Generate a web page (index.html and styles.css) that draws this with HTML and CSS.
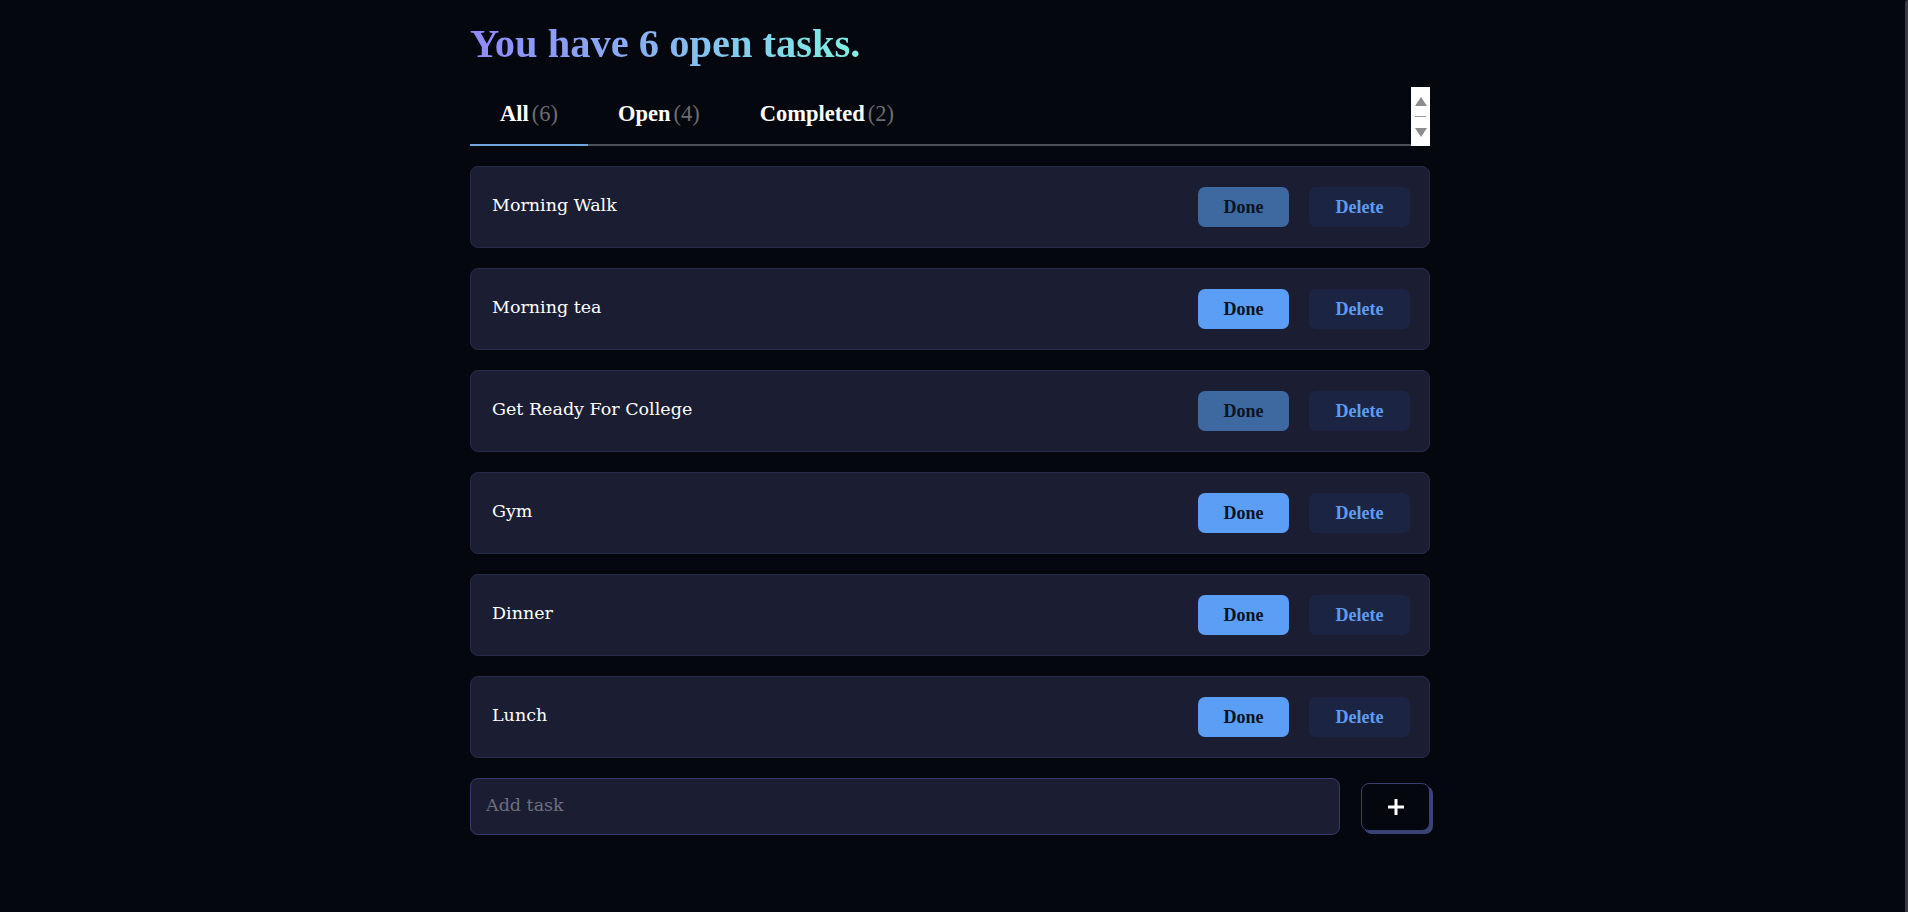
FILE: index.html
```html
<!DOCTYPE html>
<html lang="en">
<head>
<meta charset="utf-8">
<title>Tasks</title>
<link rel="stylesheet" href="styles.css">
</head>
<body>
<div class="frame-edge"></div>
<div class="page">
  <main class="app">
    <h1 class="title"><span class="grad">You have 6 open tasks.</span></h1>
    <div class="tabbar">
      <div class="tabs">
        <div class="tab active">All<span class="count">(6)</span></div>
        <div class="tab">Open<span class="count">(4)</span></div>
        <div class="tab">Completed<span class="count">(2)</span></div>
      </div>
      <div class="scroller">
        <span class="arrow up"></span>
        <span class="sep"></span>
        <span class="arrow down"></span>
      </div>
    </div>
    <ul class="list">
      <li class="card"><span class="name">Morning Walk</span><div class="actions"><button class="btn done dim">Done</button><button class="btn del">Delete</button></div></li>
      <li class="card"><span class="name">Morning tea</span><div class="actions"><button class="btn done">Done</button><button class="btn del">Delete</button></div></li>
      <li class="card"><span class="name">Get Ready For College</span><div class="actions"><button class="btn done dim">Done</button><button class="btn del">Delete</button></div></li>
      <li class="card"><span class="name">Gym</span><div class="actions"><button class="btn done">Done</button><button class="btn del">Delete</button></div></li>
      <li class="card"><span class="name">Dinner</span><div class="actions"><button class="btn done">Done</button><button class="btn del">Delete</button></div></li>
      <li class="card"><span class="name">Lunch</span><div class="actions"><button class="btn done">Done</button><button class="btn del">Delete</button></div></li>
    </ul>
    <form class="add">
      <input class="field" type="text" placeholder="Add task">
      <button class="plus" type="button" aria-label="Add">
        <svg width="18" height="18" viewBox="0 0 18 18"><path d="M9 1v16M1 9h16" stroke="#fff" stroke-width="3" fill="none"/></svg>
      </button>
    </form>
  </main>
</div>
</body>
</html>
```
FILE: styles.css
```css
html, body {
  margin: 0;
  padding: 0;
  background: #05070f;
  height: 100%;
}
body {
  font-family: "Liberation Serif", "DejaVu Serif", serif;
  color: #f2f2f2;
}
.frame-edge {
  position: fixed;
  top: 0;
  right: 0;
  width: 3px;
  height: 100%;
  background: #3a3b40;
  border-top-left-radius: 4px;
}
.page {
  display: flex;
  justify-content: center;
  padding-right: 8px;
}
.app {
  width: 960px;
  padding-top: 20px;
}
.title {
  margin: 0;
  font-size: 40.5px;
  line-height: 48px;
  font-weight: 700;
}
.grad {
  background: linear-gradient(90deg, #9088fb 0%, #86b6f2 50%, #7ff2e2 100%);
  -webkit-background-clip: text;
  background-clip: text;
  color: transparent;
}
.tabbar {
  margin-top: 19px;
  display: flex;
  height: 59px;
}
.tabs {
  flex: 1;
  display: flex;
  border-bottom: 2px solid #4c4e58;
  height: 57px;
  align-self: flex-end;
}
.tab {
  padding: 0 30px 3px;
  font-size: 22.5px;
  font-weight: 700;
  color: #ffffff;
  display: flex;
  align-items: center;
  box-sizing: border-box;
  margin-bottom: -2px;
  border-bottom: 2px solid transparent;
  height: 59px;
}
.tab.active {
  border-bottom-color: #6ea3dc;
}
.count {
  font-weight: 400;
  color: #6c6c72;
  margin-left: 3px;
}
.scroller {
  width: 19px;
  height: 59px;
  background: #ffffff;
  display: flex;
  flex-direction: column;
  align-items: center;
  padding-top: 10px;
  box-sizing: border-box;
}
.arrow {
  width: 0;
  height: 0;
  border-left: 6px solid transparent;
  border-right: 6px solid transparent;
}
.arrow.up {
  border-bottom: 9px solid #8c8c8c;
}
.arrow.down {
  border-top: 9px solid #8c8c8c;
}
.sep {
  width: 11px;
  height: 1px;
  background: #9a9a9a;
  margin: 10px 0 11px;
}
.list {
  list-style: none;
  margin: 20px 0 0;
  padding: 0;
  display: flex;
  flex-direction: column;
  gap: 20px;
}
.card {
  height: 82px;
  box-sizing: border-box;
  background: #1b1e33;
  border: 1px solid #252a47;
  border-radius: 8px;
  display: flex;
  align-items: center;
  justify-content: space-between;
  padding: 0 19px 0 21px;
}
.name {
  font-family: "DejaVu Serif", serif;
  font-size: 17.5px;
  color: #ffffff;
  padding-bottom: 4px;
}
.actions {
  display: flex;
  gap: 20px;
}
.btn {
  font-family: "Liberation Serif", serif;
  font-weight: 700;
  font-size: 18px;
  height: 40px;
  border: none;
  border-radius: 7px;
  padding: 0;
  cursor: pointer;
}
.done {
  width: 91px;
  background: #5b9ef6;
  color: #0c1322;
}
.done.dim {
  background: #3e68a0;
}
.del {
  width: 101px;
  background: #1b2543;
  color: #5d9cf1;
}
.add {
  margin: 20px 0 0;
  display: flex;
  align-items: center;
  gap: 21px;
}
.field {
  flex: 1;
  height: 57px;
  box-sizing: border-box;
  background: #1b1e33;
  border: 1px solid #343a6e;
  border-radius: 8px;
  padding: 0 15px 4px;
  font-family: "DejaVu Serif", serif;
  font-size: 17.5px;
  color: #f4f4f6;
  outline: none;
}
.field::placeholder {
  color: #6e707e;
}
.plus {
  width: 69px;
  height: 48px;
  box-sizing: border-box;
  background: #05070f;
  border: 1px solid #3a3f70;
  border-radius: 8px;
  box-shadow: 3px 3px 0 #394378;
  display: flex;
  align-items: center;
  justify-content: center;
  padding: 0;
  cursor: pointer;
}
```
